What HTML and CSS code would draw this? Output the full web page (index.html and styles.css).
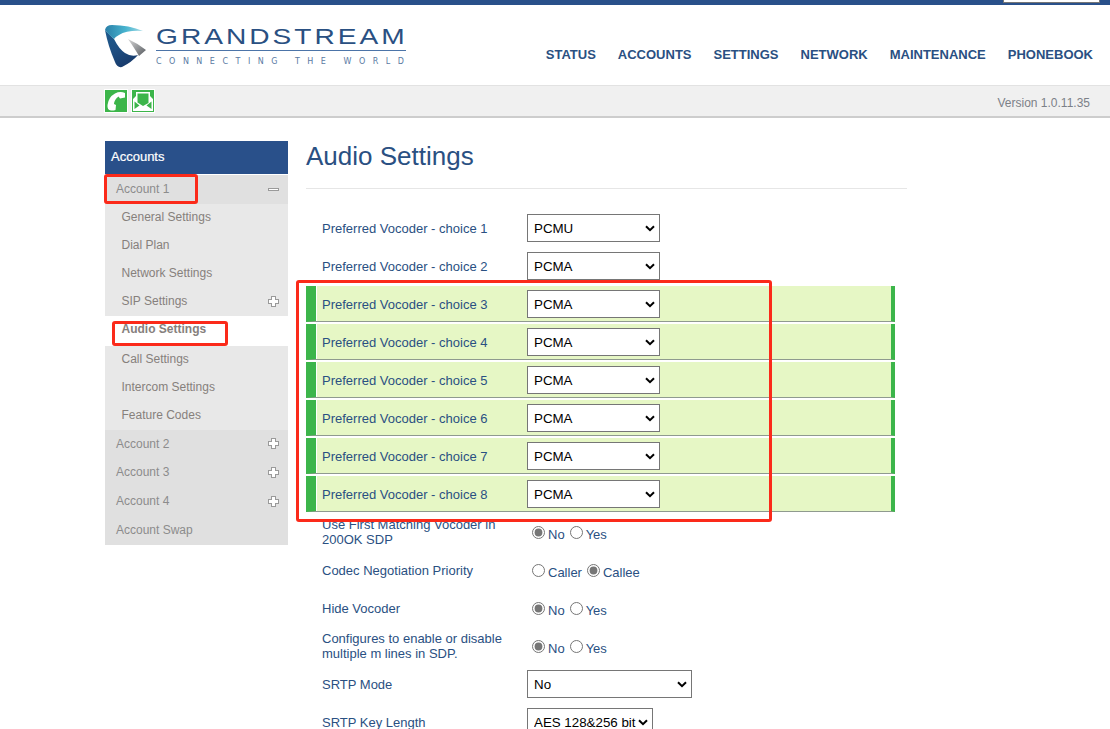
FILE: index.html
```html
<!DOCTYPE html>
<html lang="en">
<head>
<meta charset="utf-8">
<title>Audio Settings</title>
<link rel="stylesheet" href="styles.css">
</head>
<body>
<div class="topbar"><span class="topbar-input"></span></div>
<header class="header">
  <div class="logo">
    <svg class="logo-mark" width="42" height="44" viewBox="0 0 42 44">
      <defs>
        <linearGradient id="shield" x1="0.1" y1="0" x2="0.6" y2="1"><stop offset="0" stop-color="#1d5a8c"/><stop offset="0.5" stop-color="#1f4f82"/><stop offset="1" stop-color="#173a6b"/></linearGradient>
        <linearGradient id="teal" x1="0" y1="0" x2="1" y2="0"><stop offset="0" stop-color="#2a7fa8"/><stop offset="0.55" stop-color="#48b4cf"/><stop offset="1" stop-color="#a5dbe6"/></linearGradient>
        <linearGradient id="grey" x1="0" y1="0" x2="1" y2="1"><stop offset="0" stop-color="#d8d8d8"/><stop offset="1" stop-color="#55595e"/></linearGradient>
      </defs>
      <path d="M0 6 L9 15 Q14 25 20 29 Q26 33 33 31 Q27 38 17 43 Q12 44 10 38 Q3 22 0 6Z" fill="url(#shield)"/>
      <path d="M0 6 Q1 1 7 1 Q24 1 38 7 Q22 6 14 11 Q10 13 9 15 Q4 11 0 6Z" fill="url(#teal)"/>
      <path d="M23 15 Q32 19 41 26 L34 32 Q30 25 23 15Z" fill="url(#grey)"/>
    </svg>
    <div class="logo-text">
      <div class="logo-name"><span class="logo-word">GRANDSTREAM</span></div>
      <div class="logo-tag">CONNECTING THE WORLD</div>
    </div>
  </div>
  <nav class="nav">
    <a>STATUS</a><a>ACCOUNTS</a><a>SETTINGS</a><a>NETWORK</a><a>MAINTENANCE</a><a>PHONEBOOK</a>
  </nav>
</header>
<div class="subbar">
  <div class="subicons">
    <span class="subicon"><svg width="22" height="22" viewBox="0 0 22 22"><path d="M6 20.500 Q2 20 2.500 15 Q3.500 7 10 3.500 Q15 1 20 3 L20 7.500 L15 8.500 L13.500 6.500 Q9.500 9 9 14 L11 15 L10.500 20 Q8 20.800 6 20.500Z" fill="#fff"/></svg></span>
    <span class="subicon"><svg width="22" height="22" viewBox="0 0 22 22"><path d="M1 21 V9 L4 6 V2 H18 V6 L21 9 V21Z" fill="#fff"/><path d="M5.500 3.500 H16.500 V13 L11 16 L5.500 12.500Z" fill="#3cb54a"/><path d="M2.500 11.500 L7.500 15.500 L2.500 19Z M19.500 11.500 L14.500 15.500 L19.500 19Z" fill="#3cb54a"/></svg></span>
  </div>
  <span class="version">Version 1.0.11.35</span>
</div>
<div class="page">
  <aside class="side">
    <div class="side-title">Accounts</div>
    <div class="acc acc-open"><span>Account 1</span><i class="minus"></i></div>
    <ul class="sub">
      <li>General Settings</li>
      <li>Dial Plan</li>
      <li>Network Settings</li>
      <li class="has-plus"><span>SIP Settings</span><i class="plus"></i></li>
      <li class="active">Audio Settings</li>
      <li>Call Settings</li>
      <li>Intercom Settings</li>
      <li>Feature Codes</li>
    </ul>
    <div class="acc"><span>Account 2</span><i class="plus"></i></div>
    <div class="acc"><span>Account 3</span><i class="plus"></i></div>
    <div class="acc acc-tall"><span>Account 4</span><i class="plus"></i></div>
    <div class="acc acc-tall"><span>Account Swap</span></div>
  </aside>
  <main class="main">
    <h1 class="title">Audio Settings</h1>
    <div class="row"><label class="lab">Preferred Vocoder - choice 1</label><select class="sel"><option>PCMU</option></select></div>
    <div class="row"><label class="lab">Preferred Vocoder - choice 2</label><select class="sel"><option>PCMA</option></select></div>
    <div class="row changed"><label class="lab">Preferred Vocoder - choice 3</label><select class="sel"><option>PCMA</option></select></div>
    <div class="row changed"><label class="lab">Preferred Vocoder - choice 4</label><select class="sel"><option>PCMA</option></select></div>
    <div class="row changed"><label class="lab">Preferred Vocoder - choice 5</label><select class="sel"><option>PCMA</option></select></div>
    <div class="row changed"><label class="lab">Preferred Vocoder - choice 6</label><select class="sel"><option>PCMA</option></select></div>
    <div class="row changed"><label class="lab">Preferred Vocoder - choice 7</label><select class="sel"><option>PCMA</option></select></div>
    <div class="row changed"><label class="lab">Preferred Vocoder - choice 8</label><select class="sel"><option>PCMA</option></select></div>
    <div class="row"><label class="lab">Use First Matching Vocoder in 200OK SDP</label><div class="radios"><input type="radio" name="a" checked>No<input type="radio" name="a">Yes</div></div>
    <div class="row"><label class="lab">Codec Negotiation Priority</label><div class="radios"><input type="radio" name="b">Caller<input type="radio" name="b" checked>Callee</div></div>
    <div class="row"><label class="lab">Hide Vocoder</label><div class="radios"><input type="radio" name="c" checked>No<input type="radio" name="c">Yes</div></div>
    <div class="row"><label class="lab">Configures to enable or disable multiple m lines in SDP.</label><div class="radios"><input type="radio" name="d" checked>No<input type="radio" name="d">Yes</div></div>
    <div class="row"><label class="lab">SRTP Mode</label><select class="sel sel-wide"><option>No</option></select></div>
    <div class="row"><label class="lab">SRTP Key Length</label><select class="sel sel-auto"><option>AES 128&amp;256 bit</option></select></div>
  </main>
</div>
<div class="mark mark-account"></div>
<div class="mark mark-audio"></div>
<div class="mark mark-rows"></div>
</body>
</html>
```
FILE: styles.css
```css
* { box-sizing: border-box; }
html, body { height: 729px; overflow: hidden; }
body { margin: 0; background: #fff; font-family: "Liberation Sans", Arial, sans-serif; font-size: 14px; color: #2a5082; position: relative; }

.topbar { height: 5px; background: #29508a; display: flex; justify-content: flex-end; padding-right: 10px; }
.topbar-input { width: 97px; height: 3px; background: #fff; border: 1px solid #767676; border-top: 0; }

.header { height: 80px; padding: 19px 17px 0 105px; display: flex; justify-content: space-between; }
.logo { display: flex; gap: 9px; }
.logo-mark { display: block; }
.logo-text { width: 250px; }
.logo-name { height: 27px; border-bottom: 1px solid #4c74a8; white-space: nowrap; }
.logo-word { display: inline-block; font-size: 22.5px; line-height: 25px; letter-spacing: 2.4px; color: #2a5082; transform: scaleX(1.25); transform-origin: left center; }
.logo-tag { font-family: "DejaVu Sans", sans-serif; font-size: 8px; line-height: 10px; margin-top: 6px; letter-spacing: 7.5px; color: #5a7aa3; white-space: nowrap; }
.nav { display: flex; gap: 22px; padding-top: 23px; font-size: 13px; font-weight: 700; line-height: 16px; }

.subbar { height: 33px; background: #f0f0f0; border-top: 1px solid #e2e2e2; border-bottom: 2px solid #cdcdcd; padding: 3px 20px 0 104px; display: flex; justify-content: space-between; }
.subicons { display: flex; gap: 3px; }
.subicon { width: 24px; height: 24px; background: #3cb54a; border: 1px solid #fff; display: block; }
.subicon svg { display: block; }
.version { font-size: 12px; line-height: 28px; color: #7c8088; }

.page { display: flex; padding: 23px 0 0 105px; }
.side { width: 183px; font-size: 12px; color: #8c8c8c; margin-right: 18px; }
.side-title { height: 33px; background: #29508a; color: #fff; font-size: 13px; line-height: 31px; padding-left: 6px; margin-bottom: 1px; -webkit-text-stroke: 0.2px #fff; }
.acc { height: 28.5px; background: #e0e0e0; padding: 0 9px 0 11px; display: flex; justify-content: space-between; align-items: center; }
.acc-tall { height: 29px; }
.sub { list-style: none; margin: 0; padding: 0; background: #e8e8e8; color: #86807c; }
.sub li { height: 28px; line-height: 26px; padding: 0 9px 0 16.5px; }
.sub .has-plus { display: flex; justify-content: space-between; align-items: center; }
.has-plus span { margin-bottom: 2px; }
.sub .active { height: 30px; line-height: 27px; background: #fff; font-weight: 700; }
.plus, .minus { display: block; width: 11px; height: 11px; }
.plus { background: linear-gradient(#fff, #fff) center / 3px 9px no-repeat, linear-gradient(#fff, #fff) center / 9px 3px no-repeat, linear-gradient(#9a9a9a, #9a9a9a) center / 5px 11px no-repeat, linear-gradient(#9a9a9a, #9a9a9a) center / 11px 5px no-repeat; }
.minus { background: linear-gradient(#fff, #fff) center / 9px 1px no-repeat, linear-gradient(#9a9a9a, #9a9a9a) center / 11px 3px no-repeat; }

.main { width: 601px; }
.title { margin: 0 0 21px; height: 48px; padding: 0; border-bottom: 1px solid #e6e6e6; font-size: 26px; font-weight: 400; line-height: 30px; color: #2a5082; }
.row { height: 36px; width: 589px; margin-bottom: 2px; display: flex; align-items: center; padding-left: 16px; }
.lab { width: 205px; flex: none; font-size: 13px; line-height: 15px; }
.changed { background: #e6f7c5; border-left: 10px solid #3cb54a; border-right: 4px solid #3cb54a; border-bottom: 1px solid #8f9a8f; padding-left: 6px; box-shadow: inset 1px 0 0 #fff; }
.changed .lab { margin-top: 2px; }
.sel { appearance: none; width: 133px; height: 28px; font-family: "Liberation Sans", Arial, sans-serif; font-size: 13.33px; color: #000; background: #fff url("data:image/svg+xml,%3Csvg xmlns='http://www.w3.org/2000/svg' width='10' height='7' viewBox='0 0 10 7'%3E%3Cpath d='M1 1.200 L5 5.200 L9 1.200' fill='none' stroke='%23000' stroke-width='2'/%3E%3C/svg%3E") no-repeat right 4px center; border: 1px solid #767676; border-radius: 0; padding: 0 16px 0 6px; }
.changed .sel { margin-top: 1px; }
.sel-wide { width: 165px; }
.sel-auto { width: 126px; }
.radios { font-size: 13px; line-height: 16px; color: #2a5082; padding-top: 1px; white-space: nowrap; }
.radios input { accent-color: #767676; }

.mark { position: absolute; border: 3px solid #fb2a1a; border-radius: 3px; pointer-events: none; }
.mark-account { left: 104px; top: 174px; width: 94px; height: 30px; }
.mark-audio { left: 112px; top: 321px; width: 116px; height: 25px; }
.mark-rows { left: 296px; top: 280px; width: 476px; height: 242px; }
```
